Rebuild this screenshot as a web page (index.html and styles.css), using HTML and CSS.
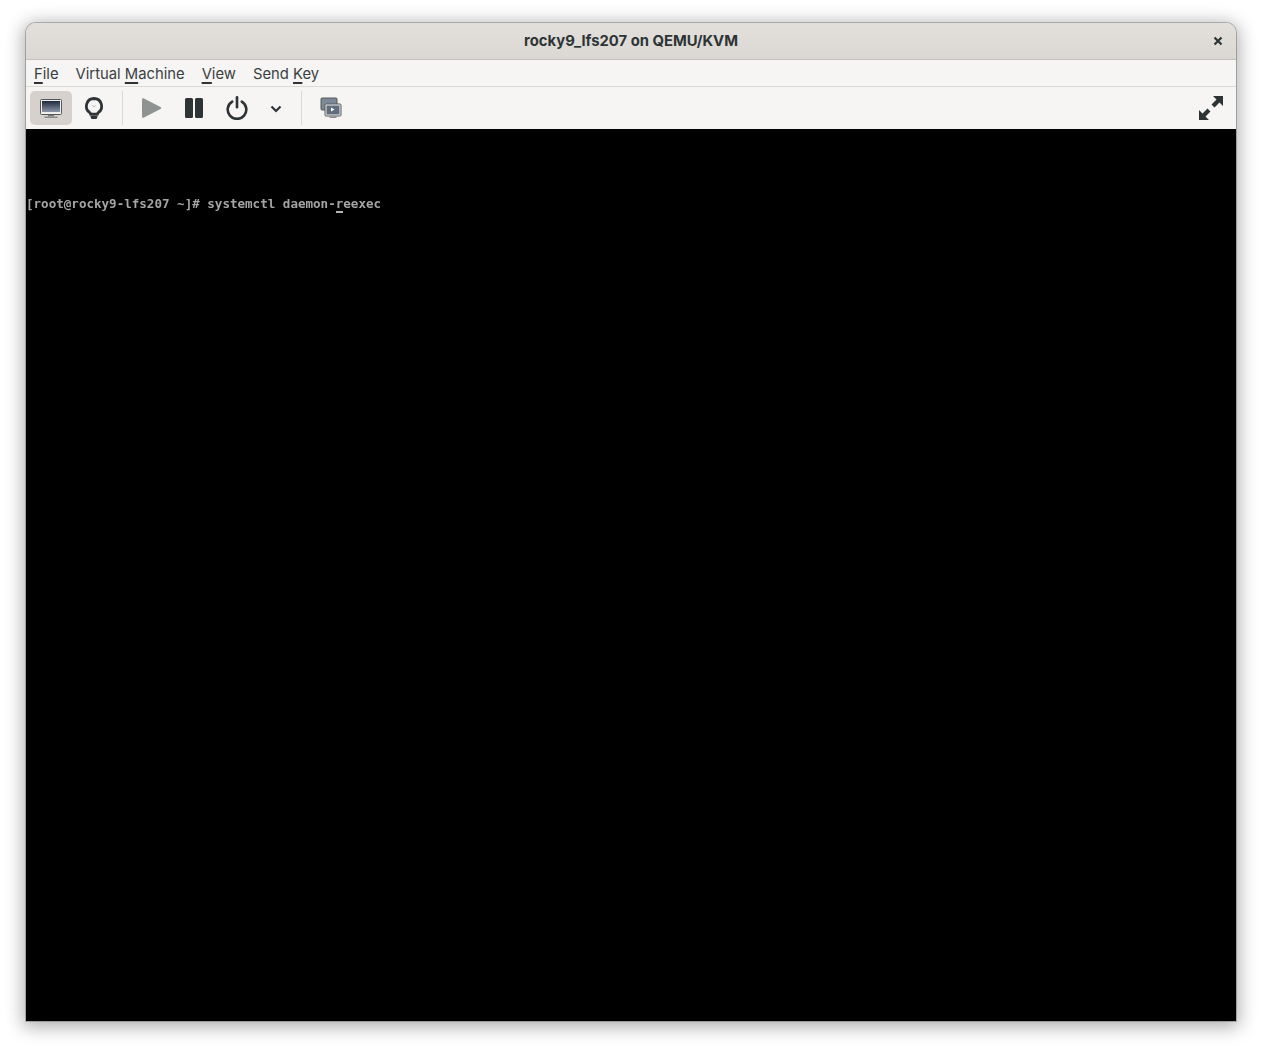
FILE: index.html
```html
<!DOCTYPE html>
<html lang="en">
<head>
<meta charset="utf-8">
<title>rocky9_lfs207 on QEMU/KVM</title>
<link rel="stylesheet" href="styles.css">
</head>
<body>
<div class="window">
  <header class="titlebar">
    <div class="title">rocky9_lfs207 on QEMU/KVM</div>
    <svg class="close" width="16" height="16" viewBox="0 0 16 16"><path d="M4.500 4.500l7 7M11.500 4.500l-7 7" stroke="#2e3436" stroke-width="2.200" fill="none"/></svg>
  </header>
  <nav class="menubar">
    <span class="menu"><u>F</u>ile</span>
    <span class="menu">Virtual <u>M</u>achine</span>
    <span class="menu"><u>V</u>iew</span>
    <span class="menu">Send <u>K</u>ey</span>
  </nav>
  <div class="toolbar">
    <button class="tool active">
      <svg width="24" height="24" viewBox="0 0 24 24">
        <defs><linearGradient id="scr" x1="0" y1="0" x2="0" y2="1"><stop offset="0" stop-color="#1f2b3d"/><stop offset="1" stop-color="#8b97a6"/></linearGradient></defs>
        <rect x="1.500" y="3.500" width="21" height="15" rx="1" fill="#eeeeec" stroke="#55585a"/>
        <rect x="3" y="5" width="18" height="11" fill="url(#scr)"/>
        <rect x="9" y="19" width="6" height="1.500" fill="#77797a"/>
        <rect x="5.500" y="20.500" width="13" height="1.500" fill="#8a8c8c"/>
      </svg>
    </button>
    <button class="tool">
      <svg width="24" height="24" viewBox="0 0 24 24">
        <path d="M12 2.500a7.700 7.700 0 0 0-4.500 13.900c.8.600 1.200 1.100 1.200 1.800h6.600c0-.7.400-1.200 1.200-1.800A7.700 7.700 0 0 0 12 2.500z" fill="none" stroke="#2e3436" stroke-width="2.800"/>
        <path d="M10.500 9.500l1.500 1.300 1.500-1.300" fill="none" stroke="#b5b5b3" stroke-width="1"/>
        <path d="M8.500 19.500h7v1.500l-1 2h-5l-1-2z" fill="#2e3436"/>
      </svg>
    </button>
    <span class="sep"></span>
    <button class="tool">
      <svg width="24" height="24" viewBox="0 0 24 24"><path d="M3 3.500c0-1.200 1-1.700 2-1.100l16.500 8.600c1 .5 1 1.500 0 2L5 21.600c-1 .6-2 .1-2-1.100z" fill="#8f9493"/></svg>
    </button>
    <button class="tool">
      <svg width="24" height="24" viewBox="0 0 24 24"><rect x="3" y="2" width="8" height="20" rx="1.500" fill="#2e3436"/><rect x="13" y="2" width="8" height="20" rx="1.500" fill="#2e3436"/></svg>
    </button>
    <button class="tool">
      <svg width="24" height="24" viewBox="0 0 24 24"><path d="M7.200 5.600a9.300 9.300 0 1 0 9.600 0" fill="none" stroke="#2e3436" stroke-width="2.600" stroke-linecap="round"/><path d="M12 1.300v10" stroke="#2e3436" stroke-width="2.600" stroke-linecap="round"/></svg>
    </button>
    <button class="tool narrow">
      <svg width="16" height="16" viewBox="0 0 16 16"><path d="M3.500 6.500l4.500 4.500 4.500-4.500" fill="none" stroke="#2e3436" stroke-width="2.200"/></svg>
    </button>
    <span class="sep second"></span>
    <button class="tool">
      <svg width="24" height="24" viewBox="0 0 24 24">
        <rect x="2" y="2" width="16" height="12" rx="1" fill="#7d8896" stroke="#55585a"/>
        <rect x="6" y="8" width="16" height="12" rx="1" fill="#eeeeec" stroke="#55585a"/>
        <rect x="7.500" y="9.500" width="13" height="9" fill="#5f6c7c"/>
        <path d="M12 11.500l3.500 2-3.500 2z" fill="#fff"/>
        <rect x="10.500" y="20.500" width="7" height="1.500" fill="#8a8c8c"/>
      </svg>
    </button>
    <button class="tool fullscreen">
      <svg width="28" height="28" viewBox="0 0 28 28"><path d="M16 2h10v10l-3.500-3.500-5 5-3-3 5-5zM2 26V16l3.500 3.500 5-5 3 3-5 5L12 26z" fill="#2e3436"/></svg>
    </button>
  </div>
  <main class="console">
    <pre class="line">[root@rocky9-lfs207 ~]# systemctl daemon-<span class="cursor">r</span>eexec</pre>
  </main>
</div>
</body>
</html>
```
FILE: styles.css
```css
html, body { margin: 0; height: 100%; background: #fff; overflow: hidden; }
body { padding: 23px 26px 29px; box-sizing: border-box; font-family: "Inter", sans-serif; color: #2e3436; }
.window {
  height: 998px;
  display: flex;
  flex-direction: column;
  border-radius: 10px 10px 0 0;
  overflow: hidden;
  background: #f6f5f4;
  box-shadow: 0 0 0 1px rgba(0,0,0,.22), 0 3px 18px 3px rgba(0,0,0,.32);
}
.titlebar {
  height: 36px;
  flex: none;
  display: flex;
  align-items: center;
  justify-content: center;
  position: relative;
  background: linear-gradient(#e3e0dc, #dbd8d4);
  border-bottom: 1px solid #c4c0bb;
}
.title { font-size: 14.800px; font-weight: 700; color: #2e3436; margin-top: -1px; }
.close { position: absolute; right: 10px; top: 10px; }
.menubar {
  height: 24px;
  flex: none;
  display: flex;
  align-items: center;
  gap: 17px;
  padding: 2px 0 0 8px;
  font-size: 14.800px;
  border-bottom: 1px solid #dcd9d5;
  color: #3a3f41;
}
.menu u { text-underline-offset: 3px; text-decoration-thickness: 1.500px; text-decoration-skip-ink: none; text-decoration-color: #2e3436; }
.toolbar {
  height: 42px;
  flex: none;
  display: flex;
  align-items: center;
  padding: 0 4px;
  box-sizing: border-box;
}
.tool {
  width: 42px;
  height: 34px;
  flex: none;
  border: 0;
  padding: 0;
  margin-right: 1px;
  background: none;
  display: flex;
  align-items: center;
  justify-content: center;
  border-radius: 5px;
}
.tool.active { background: #d6d1cc; }
.tool.narrow { width: 34px; }
.sep { width: 1px; height: 34px; background: #dcd9d5; margin: 0 7px 0 6px; flex: none; }
.sep.second { margin: 0 8px 0 7px; }
.fullscreen { margin-left: auto; margin-right: 0; }
.console { flex: 1; background: #000; padding-top: 67px; }
.line {
  margin: 0;
  font-family: "DejaVu Sans Mono", monospace;
  font-size: 12.550px;
  font-weight: 700;
  line-height: 16px;
  color: #a4a4a4;
  white-space: pre;
  filter: blur(.35px);
}
.cursor { border-bottom: 2px solid #b4b4b4; }
```
